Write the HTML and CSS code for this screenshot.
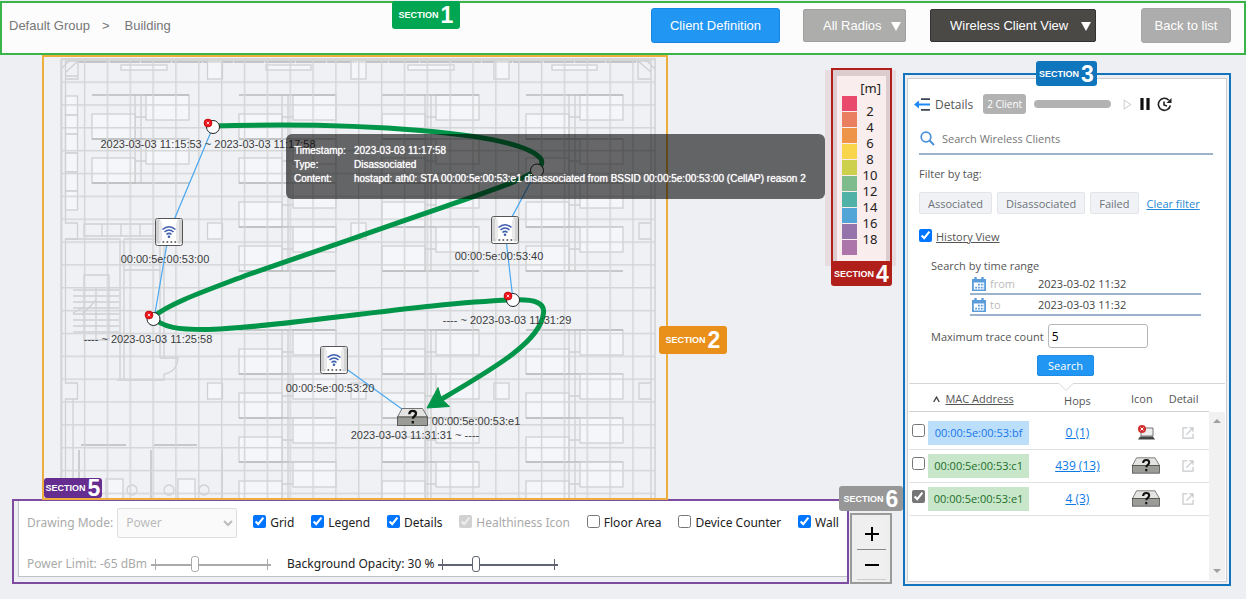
FILE: index.html
```html
<!DOCTYPE html>
<html lang="en">
<head>
<meta charset="utf-8">
<title>Wireless Client View</title>
<link rel="stylesheet" href="styles.css">
</head>
<body>
<svg class="defs" aria-hidden="true">
  <defs>
    <g id="deskL"><rect width="43" height="25"/><path class="dark" d="M0 25H97"/></g>
    <g id="deskR"><rect width="43" height="25"/><path d="M-11 0V44M-5 0V44M-11 22H0"/></g>
    <g id="block3">
      <use href="#deskR" x="54"/><use href="#deskL" y="19"/>
      <use href="#deskR" x="54" y="44"/><use href="#deskL" y="63"/>
      <path class="dark" d="M0 0H97"/>
    </g>
    <g id="block5">
      <use href="#block3"/>
      <use href="#deskR" x="54" y="88"/><use href="#deskL" y="107"/>
      <use href="#deskR" x="54" y="132"/><use href="#deskL" y="151"/>
    </g>
    <g id="ap">
      <rect x="0.5" y="0.5" width="27" height="27" rx="2" fill="#fff" stroke="#555"/>
      <path d="M1 1.500h4l1.500 3v17l-1.500 4H1zM27 1.500h-4l-1.500 3v17l1.500 4h4z" fill="#d2d2d2"/>
      <path d="M5 3v20M23 3v20" stroke="#f2f2f2" stroke-width="1.500"/>
      <g fill="none" stroke="#3f5fae" stroke-width="1.600"><path d="M7.500 11.500q6.500-5.500 13 0M9.500 14q4.500-4 9 0M11.500 16.500q2.500-2.200 5 0"/></g>
      <circle cx="14" cy="18.700" r="1.300" fill="#3f5fae"/>
      <path d="M7.500 24h14" stroke="#444" stroke-width="1.500" stroke-dasharray="1.700 2.300"/>
    </g>
    <g id="drive">
      <path d="M5 .5H25.500L30.500 9H.5z" fill="#e4e4e2" stroke="#555" stroke-width=".8"/>
      <rect x=".5" y="9" width="30" height="8.500" fill="#9b9b98" stroke="#444" stroke-width=".8"/>
      <path d="M12.300 6.200q.2-3.300 3.500-3.300 3.200 0 3.200 2.700 0 1.500-1.600 2.600-1.500 1-1.500 2.600M15.800 13v2.500" fill="none" stroke="#111" stroke-width="2.300"/>
    </g>
    <g id="stop"><circle r="4" fill="#f0121b" stroke="#a30000" stroke-width=".6"/><path d="M-1.300-1.300l2.600 2.600M1.300-1.300l-2.600 2.600" stroke="#fff" stroke-width=".8"/></g>
    <g id="cal">
      <path d="M0 2h14v12H0z" fill="#5b9cdb"/><path d="M3.500 0v3M10.500 0v3" stroke="#5b9cdb" stroke-width="2.400"/>
      <path d="M1.800 5.500h10.400v7H1.800z" fill="#fff"/>
      <path d="M6 7.600h6M3.200 10.600h9" stroke="#5b9cdb" stroke-width="1.800" stroke-dasharray="1.800 1"/>
    </g>
    <g id="ext" fill="none" stroke="#c6cacd" stroke-width="1.300"><path d="M5.500 1H1v10.500h10.500V7M7.500 1h4v4M11.500 1L4.500 8"/></g>
    <pattern id="grid" x="61" y="58.500" width="22.850" height="22.850" patternUnits="userSpaceOnUse"><path d="M.7 0V23M0 .7H23" stroke="#d4d5d6" stroke-width="1.500" fill="none"/></pattern>
  </defs>
</svg>

<header class="topbar">
  <nav class="crumbs" aria-label="Breadcrumb"><span>Default Group</span><span class="sep">&gt;</span><span>Building</span></nav>
  <div class="actions">
    <button class="btn primary" type="button">Client Definition</button>
    <span class="drop radios"><select aria-label="Radios"><option>All Radios</option></select><i></i></span>
    <span class="drop view"><select aria-label="View"><option>Wireless Client View</option></select><i></i></span>
    <button class="btn back" type="button">Back to list</button>
  </div>
  <span class="tag tag1">SECTION <b>1</b></span>
</header>

<main class="main">
  <div class="left">
    <div class="stage">
      <section class="map">
        <svg class="plan" viewBox="44 57 622 441" role="img" aria-label="Floor plan">
          <g class="walls">
            <path d="M61 59H655V498M61 59V498M65 61H651V498M65.500 61V223H77.500V239H65.500V383H77.500V399H65.500V498M73 399V498M651 223H639V239H651M651 383H639V399H651"/>
            <path class="dark" d="M79 62H640" stroke-dasharray="30 1"/>
            <path d="M61 69L71 59M66 72L78 61V79H66M655 69L645 59M651 72L638 61V79H651M66 76H78"/>
            <g><rect x="65.500" y="96" width="12" height="19"/><rect x="65.500" y="115" width="12" height="19"/><rect x="65.500" y="134" width="12" height="19"/><rect x="65.500" y="153" width="12" height="19"/><rect x="65.500" y="172" width="12" height="19"/><rect x="65.500" y="191" width="12" height="19"/></g>
            <g><rect x="121" y="65" width="46" height="5"/><rect x="266" y="65" width="45" height="5"/><rect x="408" y="65" width="46" height="5"/><rect x="552" y="65" width="45" height="5"/></g>
            <g><rect x="207.500" y="60" width="15" height="19"/><rect x="351" y="60" width="15" height="19"/><rect x="494" y="60" width="15" height="19"/></g>
            <g><rect x="207.500" y="223" width="15" height="16"/><rect x="351" y="223" width="15" height="16"/><rect x="494" y="223" width="15" height="16"/><rect x="207.500" y="383" width="15" height="16"/><rect x="351" y="383" width="15" height="16"/><rect x="494" y="383" width="15" height="16"/></g>
            <use href="#block3" x="92" y="95"/><use href="#block5" x="239" y="95"/><use href="#block5" x="382" y="95"/><use href="#block5" x="526" y="95"/>
            <use href="#block5" x="239" y="330"/><use href="#block5" x="382" y="330"/><use href="#block5" x="526" y="330"/>
            <path d="M84 224H160V236H84zM102 224V236M121 224V236M140 224V236M65.500 239H120V380M124 239V380M117 380H164V374M124 270H160V358M160 239V270M124 239H164V358H160M164 358H178Q177 372 164 374"/>
            <path d="M84 275H109V340H84zM96 287V340M73 290H119M73 296H119M73 302H119M73 308H119M73 314H119M73 320H119M73 326H119M73 332H119M73 313L84 307 83 314 96 300"/>
            <path class="dark" d="M81 445H126M154 445H197M79 450V480M151 450V498M222 450V498"/>
            <rect x="106" y="479" width="17" height="20"/><rect x="178" y="479" width="17" height="20"/><circle cx="132" cy="490" r="5"/><circle cx="169" cy="490" r="5"/><circle cx="204" cy="490" r="5"/>
          </g>
          <rect x="61" y="58" width="594.500" height="440" fill="url(#grid)"/>
          <g class="links"><path d="M213 127L169 232 154 319M537 170L505 230 513 300M334 360L413 417"/></g>
          <g class="trace">
            <path d="M213 126C350 122 520 131 541 159Q543 163 540 167C525 182 475 195 350 239.500L247 275C205 291 170 303 153 317C162 328 180 329.500 205 329.500C270 329 420 303 513 300C535 299 545 303 543.500 313C541 340 500 365 440 400"/>
            <path class="head" d="M427 408L438 387.500 441.500 399 449.500 406.500z"/>
          </g>
          <g class="stops"><circle cx="213" cy="127" r="6.500"/><circle cx="537" cy="170.500" r="6.500"/><circle cx="153.500" cy="319" r="6.500"/><circle cx="513" cy="300" r="6.500"/></g>
          <use href="#stop" x="208" y="123"/><use href="#stop" x="149" y="315"/><use href="#stop" x="508" y="296"/>
          <use href="#ap" x="155" y="218"/><use href="#ap" x="491" y="216"/><use href="#ap" x="320" y="346"/>
          <use href="#drive" x="397" y="408"/>
          <g class="labels">
            <text x="208" y="148">2023-03-03 11:15:53 ~ 2023-03-03 11:17:58</text>
            <text x="165" y="263">00:00:5e:00:53:00</text>
            <text x="499" y="260">00:00:5e:00:53:40</text>
            <text x="148" y="343">---- ~ 2023-03-03 11:25:58</text>
            <text x="507" y="324">---- ~ 2023-03-03 11:31:29</text>
            <text x="330" y="392">00:00:5e:00:53:20</text>
            <text x="476" y="425">00:00:5e:00:53:e1</text>
            <text x="415" y="439">2023-03-03 11:31:31 ~ ----</text>
          </g>
        </svg>
        <dl class="tip">
          <dt>Timestamp:</dt><dd>2023-03-03 11:17:58</dd>
          <dt>Type:</dt><dd>Disassociated</dd>
          <dt>Content:</dt><dd>hostapd: ath0: STA 00:00:5e:00:53:e1 disassociated from BSSID 00:00:5e:00:53:00 (CellAP) reason 2</dd>
        </dl>
        <span class="tag tag2">SECTION <b>2</b></span>
        <span class="tag tag5">SECTION <b>5</b></span>
      </section>

      <aside class="legend">
        <div class="scale">
          <div class="unit">[m]</div>
          <div class="cols">
            <div class="swatches"><i class="c1"></i><i class="c2"></i><i class="c3"></i><i class="c4"></i><i class="c5"></i><i class="c6"></i><i class="c7"></i><i class="c8"></i><i class="c9"></i><i class="c10"></i></div>
            <div class="nums"><span>2</span><span>4</span><span>6</span><span>8</span><span>10</span><span>12</span><span>14</span><span>16</span><span>18</span></div>
          </div>
        </div>
        <span class="tag tag4">SECTION <b>4</b></span>
      </aside>
    </div>

    <div class="bottom">
      <section class="controls">
        <div class="controls-in">
          <div class="row">
            <label class="off" for="mode">Drawing Mode:</label>
            <span class="mode"><select id="mode" disabled><option>Power</option></select><svg viewBox="0 0 10 7"><path d="M1 1l4 4 4-4" fill="none" stroke="#bbb" stroke-width="2"/></svg></span>
            <div class="checks">
              <label><input type="checkbox" checked>Grid</label>
              <label><input type="checkbox" checked>Legend</label>
              <label><input type="checkbox" checked>Details</label>
              <label class="off"><input type="checkbox" checked disabled>Healthiness Icon</label>
              <label><input type="checkbox">Floor Area</label>
              <label><input type="checkbox">Device Counter</label>
              <label><input type="checkbox" checked>Wall</label>
            </div>
          </div>
          <div class="row">
            <label class="off" for="power">Power Limit: -65 dBm</label>
            <input class="slide dim" id="power" type="range" min="0" max="100" value="36" disabled>
            <label class="opacity" for="opacity">Background Opacity: 30 %</label>
            <input class="slide" id="opacity" type="range" min="0" max="100" value="30">
          </div>
        </div>
      </section>
      <section class="zoom">
        <button type="button" aria-label="Zoom in"><svg viewBox="0 0 14 14"><path d="M7 0V14M0 7H14"/></svg></button>
        <button type="button" aria-label="Zoom out"><svg viewBox="0 0 14 14"><path d="M0 7H14"/></svg></button>
        <span class="tag tag6">SECTION <b>6</b></span>
      </section>
    </div>
  </div>

  <aside class="details">
    <div class="panel">
      <div class="head-row">
        <svg class="collapse" viewBox="0 0 17 13"><path d="M7 1.200H16M7 11.800H16" stroke="#3c4654" stroke-width="1.800"/><path d="M3 6.500H16" stroke="#1e88f5" stroke-width="2"/><path d="M0 6.500L5 2.500V10.500z" fill="#1e88f5"/></svg>
        <span class="ttl">Details</span>
        <span class="count">2 Client</span>
        <span class="bar"></span>
        <svg class="play" viewBox="0 0 8 10"><path d="M1 1L7 5 1 9z" fill="none" stroke="#d5d5d5"/></svg>
        <svg class="pause" viewBox="0 0 10 12"><path d="M2 0V12M8 0V12" stroke="#111" stroke-width="3.200"/></svg>
        <svg class="again" viewBox="0 0 15 15"><path d="M11.800 3.200A6 6 0 1 0 13.300 8.500M7 4.500V8l3 1" fill="none" stroke="#222" stroke-width="1.600"/><path d="M14.500 1V6H9.500z" fill="#222"/></svg>
      </div>
      <label class="find">
        <svg viewBox="0 0 15 15"><circle cx="6" cy="6" r="4.800" fill="none" stroke="#4a90d9" stroke-width="1.700"/><path d="M9.500 9.500L14 14" stroke="#4a90d9" stroke-width="2"/></svg>
        <input type="text" placeholder="Search Wireless Clients" aria-label="Search Wireless Clients">
      </label>
      <div class="by">Filter by tag:</div>
      <div class="tags"><button type="button">Associated</button><button type="button">Disassociated</button><button type="button">Failed</button><a href="#">Clear filter</a></div>
      <label class="history"><input type="checkbox" checked><span>History View</span></label>
      <div class="range">
        <div class="lead">Search by time range</div>
        <label class="date"><svg viewBox="0 0 14 14"><use href="#cal"/></svg><span>from</span><input type="text" value="2023-03-02 11:32"></label>
        <label class="date"><svg viewBox="0 0 14 14"><use href="#cal"/></svg><span>to</span><input type="text" value="2023-03-03 11:32"></label>
        <label class="max"><span>Maximum trace count</span><input type="text" value="5"></label>
      </div>
      <button class="go" type="button">Search</button>
      <div class="list">
        <svg class="notch" viewBox="0 0 16 9"><path d="M0 0H16L8 8z" fill="#fff"/><path d="M0 .5H1L8 7.500 15 .5H16" fill="none" stroke="#d5d7d9"/></svg>
        <table>
          <colgroup><col class="k1"><col class="k2"><col class="k3"><col class="k4"><col class="k5"></colgroup>
          <thead><tr><th></th><th class="mh"><svg viewBox="0 0 7 7"><path d="M.7 6L3.500 1.200 6.300 6" fill="none" stroke="#444" stroke-width="1.400"/></svg><u>MAC Address</u></th><th class="hops">Hops</th><th class="narrow">Icon</th><th class="narrow">Detail</th></tr></thead>
          <tbody>
            <tr><td><input type="checkbox" aria-label="00:00:5e:00:53:bf"></td><td><span class="mac blue">00:00:5e:00:53:bf</span></td><td><a href="#">0 (1)</a></td>
              <td><svg class="lap" viewBox="0 0 17 15"><path d="M5 3H15V11H3V6" fill="#eee" stroke="#777"/><path d="M2 11.500H15L17 14.500H0z" fill="#444"/><circle cx="4" cy="4" r="4" fill="#d32f2f"/><path d="M2.500 2.500l3 3M5.500 2.500l-3 3" stroke="#fff"/></svg></td>
              <td><svg class="open" viewBox="0 0 12.500 12.500"><use href="#ext"/></svg></td></tr>
            <tr><td><input type="checkbox" aria-label="00:00:5e:00:53:c1"></td><td><span class="mac green">00:00:5e:00:53:c1</span></td><td><a href="#">439 (13)</a></td>
              <td><svg class="drv" viewBox="0 0 31 18"><use href="#drive"/></svg></td><td><svg class="open" viewBox="0 0 12.500 12.500"><use href="#ext"/></svg></td></tr>
            <tr><td><input class="grey" type="checkbox" checked aria-label="00:00:5e:00:53:e1"></td><td><span class="mac green">00:00:5e:00:53:e1</span></td><td><a href="#">4 (3)</a></td>
              <td><svg class="drv" viewBox="0 0 31 18"><use href="#drive"/></svg></td><td><svg class="open" viewBox="0 0 12.500 12.500"><use href="#ext"/></svg></td></tr>
          </tbody>
        </table>
        <div class="scroll"><i class="up"></i><i class="down"></i></div>
      </div>
    </div>
    <span class="tag tag3">SECTION <b>3</b></span>
  </aside>
</main>
</body>
</html>
```

FILE: styles.css
```css
* { box-sizing: border-box; }
body { margin: 0; min-height: 100vh; background: #edeff3; font-family: "Noto Sans", "Open Sans", sans-serif; font-size: 12px; color: #222; }
svg { display: block; flex: none; }
button, select, input { font-family: inherit; font-size: inherit; margin: 0; }
input[type="checkbox"] { width: 13px; height: 13px; accent-color: #0075ff; flex: none; }
.defs { position: absolute; width: 0; height: 0; }

.tag { position: absolute; z-index: 5; display: flex; align-items: center; justify-content: center; gap: 2px; width: 61px; height: 25px; border-radius: 3px; color: #fff; font: bold 9px "Liberation Sans", Arial, sans-serif; white-space: nowrap; }
.tag b { font-size: 23px; line-height: 20px; }
.tag1 { left: 390px; top: -2px; width: 68px; height: 28px; background: #00a651; }
.tag2 { right: -61px; top: 269px; width: 68px; height: 28px; background: #e8901a; }
.tag3 { left: 131px; top: -14px; background: #0f75bc; }
.tag4 { left: -2px; bottom: -24px; background: #b11f1a; }
.tag5 { left: 0; bottom: 0; width: 58px; height: 20px; background: #662d91; }
.tag6 { right: -13px; top: -29px; width: 64px; background: #979797; }

.topbar { position: relative; display: flex; align-items: center; justify-content: space-between; height: 54px; margin-top: 1px; padding: 0 13px 5px 7px; border: 2px solid #39b54a; background: #fcfcfd; font-family: "Liberation Sans", Arial, sans-serif; font-size: 13px; }
.crumbs { display: flex; color: #777; }
.crumbs .sep { margin: 0 15px 0 12px; }
.actions { display: flex; align-items: center; }
.btn { height: 35px; border: 1px solid transparent; border-radius: 3px; color: #fff; }
.primary { width: 129px; margin-right: 23px; background: #2196f3; border-color: #1485e0; }
.back { width: 90px; background: #adadad; border-color: #a6a6a6; }
.drop { position: relative; display: block; height: 33px; color: #fff; }
.drop select { width: 100%; height: 100%; padding: 0 19px; appearance: none; border: 1px solid #9f9f9f; border-radius: 2px; background: #adadab; color: #fff; }
.drop i { position: absolute; right: 5px; top: 13px; border: 5px solid transparent; border-top: 9px solid #fff; border-bottom: 0; }
.radios { width: 103px; margin-right: 24px; }
.view { width: 166px; margin-right: 45px; }
.view select { background: #4a4946; border-color: #333; }

.main { display: flex; align-items: flex-start; gap: 11px; padding: 0 15px 14px 12px; }
.left { flex: 1; min-width: 0; }
.stage { display: flex; justify-content: space-between; align-items: flex-start; }
.map { position: relative; flex: 1; margin: 0 163px 0 30px; border: 2px solid #eeae3c; background: #eff1f5; }
.plan { width: 100%; height: auto; }
.walls { fill: none; stroke: #cfd0d2; stroke-width: 1.3; }
.walls rect, .defs rect[height="25"] { fill: #ffffff66; }
.walls .dark, .defs .dark { stroke: #b9babb; }
.links path { fill: none; stroke: #4aa8f0; stroke-width: 1.2; }
.trace path { fill: none; stroke: #009548; stroke-width: 5; }
.trace .head { fill: #009548; stroke-width: 1; }
.stops circle { fill: #fff; stroke: #222; }
.labels { fill: #3c3c3c; font: 11px "Liberation Sans", Arial, sans-serif; text-anchor: middle; }
.tip { position: absolute; z-index: 3; left: 242px; top: 77px; display: grid; grid-template-columns: 60px max-content; align-content: center; width: 539px; height: 65px; margin: 0; padding: 0 8px 4px; border-radius: 6px; background: rgba(0,0,0,.58); color: #fff; font: 10px/14px "Liberation Sans", Arial, sans-serif; text-shadow: 0 0 1px #fff; }
.tip dd { margin: 0; }

.legend { position: relative; flex: none; width: 61px; height: 196px; margin-top: 13px; padding: 6px 4px 0; border: 2px solid #b11f1a; background: #dccbcf; box-shadow: 4px 2px 0 #e7dde0, -6px 2px 0 #e7dde0; }
.scale { height: 100%; background: #faeded; padding: 4px 5px 0; font-size: 13px; line-height: 16px; }
.unit { text-align: right; }
.cols { display: flex; gap: 4px; }
.swatches { width: 15px; }
.swatches i { display: block; height: 16px; border-bottom: 1px solid #faeded; }
.nums { width: 18px; padding-top: 7px; text-align: center; }
.nums span { display: block; }
.c1 { background: #e94a6b; } .c2 { background: #e97e60; } .c3 { background: #ee9448; } .c4 { background: #f9d54c; } .c5 { background: #cdd04c; }
.c6 { background: #7fbc8d; } .c7 { background: #50b2a6; } .c8 { background: #52a5d6; } .c9 { background: #9474aa; } .c10 { background: #ad76aa; }

.bottom { display: flex; align-items: flex-end; margin-top: -1px; }
.controls { flex: 1; height: 85px; padding: 0 0 5px 4px; border: 2px solid #7d4ba0; }
.controls-in { height: 100%; padding: 6px 8px 0; border: 1px solid #bfc3c8; border-top: 0; border-right: 0; background: #fff; }
.row { display: flex; align-items: center; height: 31px; margin-bottom: 10px; white-space: nowrap; }
.off { color: #aaa; }
.mode { position: relative; width: 120px; margin: 0 16px 0 4px; }
.mode select { width: 100%; height: 30px; padding: 0 8px; appearance: none; border: 1px solid #ddd; border-radius: 2px; background: #fafafa; color: #bbb; opacity: 1; }
.mode svg { position: absolute; right: 4px; top: 12px; width: 10px; height: 7px; }
.checks { display: flex; flex: 1; justify-content: space-between; }
.checks label { display: flex; align-items: center; gap: 4px; }
.checks input { margin-bottom: 3px; }
.opacity { margin-left: 16px; }
.slide { appearance: none; width: 120px; height: 16px; margin-left: 4px; background: linear-gradient(#5f6470,#5f6470) 0 8px/120px 2px no-repeat, linear-gradient(#5f6470,#5f6470) 4px 3px/1px 11px no-repeat, linear-gradient(#5f6470,#5f6470) 116px 3px/1px 11px no-repeat; }
.dim { background: linear-gradient(#aaa,#aaa) 0 8px/120px 2px no-repeat, linear-gradient(#aaa,#aaa) 4px 3px/1px 11px no-repeat, linear-gradient(#aaa,#aaa) 116px 3px/1px 11px no-repeat; }
.slide::-webkit-slider-thumb { appearance: none; width: 8px; height: 16px; border: 1px solid #5f6470; border-radius: 3px; background: #fff; }
.dim::-webkit-slider-thumb { border-color: #aaa; }
.zoom { position: relative; width: 42px; height: 71px; margin-left: 1px; padding: 3px 4px 2px 5px; border: 2px solid #999b98; background: #eee; }
.zoom button { display: flex; align-items: center; justify-content: center; width: 100%; height: 50%; padding: 0; border: 0; background: #efefef; }
.zoom button + button { border-top: 1px solid #888; border-bottom: 1px solid #ccc; }
.zoom svg { width: 14px; height: 14px; stroke: #000; stroke-width: 2; }

.details { position: relative; width: 328px; height: 513px; margin-top: 18px; padding: 3px 2px 2px; border: 2px solid #1274bd; }
.panel { display: flex; flex-direction: column; height: 100%; border: 1px solid #ccced1; background: #fff; color: #555; font-family: "Open Sans", "Noto Sans", sans-serif; font-size: 11px; }
.head-row { display: flex; align-items: center; height: 22px; margin: 14px 0 0 6px; }
.collapse { width: 17px; height: 13px; }
.ttl { margin: 0 10px 0 4px; font-size: 12px; }
.count { width: 43px; height: 20px; border-radius: 3px; background: #b2b2b2; color: #fff; font-size: 10px; line-height: 20px; text-align: center; }
.bar { width: 77px; height: 8px; margin: 0 12px 0 8px; border-radius: 4px; background: #b2b2b2; }
.play { width: 9px; height: 11px; }
.pause { width: 10px; height: 12px; margin: 0 7px 0 8px; }
.again { width: 15px; height: 15px; }
.find { display: flex; align-items: center; gap: 7px; height: 31px; margin: 9px 13px 0 11px; padding: 0 1px; border-bottom: 2px solid #9bb4cc; }
.find svg { width: 15px; height: 15px; }
.find input { flex: 1; border: 0; padding: 0; outline: 0; background: none; }
.find input::placeholder { color: #777; }
.by { margin: 11px 0 0 11px; line-height: 16px; }
.tags { display: flex; align-items: center; gap: 5px; margin: 10px 0 0 11px; }
.tags button { height: 22px; padding: 0 8px; border: 1px solid #e2e5e9; border-radius: 2px; background: #f0f2f6; color: #6d7378; }
.tags a { margin-left: 3px; color: #1e88d2; }
.history { display: flex; align-items: center; gap: 4px; margin: 14px 0 0 11px; line-height: 18px; }
.history input { margin-bottom: 4px; }
.history span { text-decoration: underline; }
.range { margin: 12px 25px 0 23px; }
.lead { line-height: 16px; }
.date { display: flex; align-items: center; height: 21px; margin-left: 39px; padding-left: 2px; border-bottom: 2px solid #9bb4cc; color: #bbb; }
.date svg { width: 14px; height: 14px; }
.date span { width: 48px; margin-left: 4px; }
.date input { flex: 1; min-width: 0; padding: 0; border: 0; background: none; color: #444; }
.max { display: flex; align-items: center; gap: 4px; margin-top: 8px; }
.max input { width: 100px; height: 24px; padding: 0 3px; border: 1px solid #b5b8bb; border-radius: 3px; font-size: 12px; }
.go { width: 57px; height: 21px; margin: 7px 0 7px 129px; padding: 0; border: 1px solid #1e8be6; border-radius: 2px; background: #2196f3; color: #fff; }
.list { position: relative; display: flex; flex: 1; align-items: flex-start; margin: 0 1px 1px; border-top: 1px solid #d5d7d9; }
.notch { position: absolute; left: 149px; top: -1px; width: 16px; height: 9px; }
table { flex: 1; table-layout: fixed; border-collapse: collapse; text-align: center; }
.k1 { width: 19px; } .k2 { width: 102px; } .k3 { width: 99px; } .k4 { width: 42px; } .k5 { width: 42px; }
th { height: 27px; padding: 2px 0 0; border-bottom: 1px solid #cfd1d3; font-weight: normal; }
th.mh { padding-right: 10px; white-space: nowrap; }
th.hops { padding-top: 6px; }
th.narrow { padding-right: 9px; }
.mh svg { display: inline-block; width: 7px; height: 7px; margin-right: 5px; }
td { height: 33px; padding: 0; border-bottom: 1px solid #dfe1e4; }
tbody tr:first-child td { height: 38px; padding-top: 5px; }
td a { color: #0d7ae5; font-size: 12px; }
td svg { margin: 0 auto; }
td input { display: block; margin: -4px auto 0; }
.grey { accent-color: #767676 !important; }
.mac { display: block; height: 24px; line-height: 24px; }
.blue { background: #bbdefb; color: #1976e8; }
.green { background: #c8e6c9; color: #216e2a; }
.lap { width: 17px; height: 15px; }
.drv { width: 28px; height: 17px; }
.open { width: 12px; height: 12px; }
.scroll { display: flex; flex-direction: column; justify-content: space-between; align-items: center; width: 16px; height: 168px; margin-top: 28px; padding: 7px 0; background: #f1f1f1; }
.scroll i { border: 4px solid transparent; }
.up { border-top: 0 !important; border-bottom-color: #a0a0a0 !important; }
.down { border-bottom: 0 !important; border-top-color: #a0a0a0 !important; }
```
